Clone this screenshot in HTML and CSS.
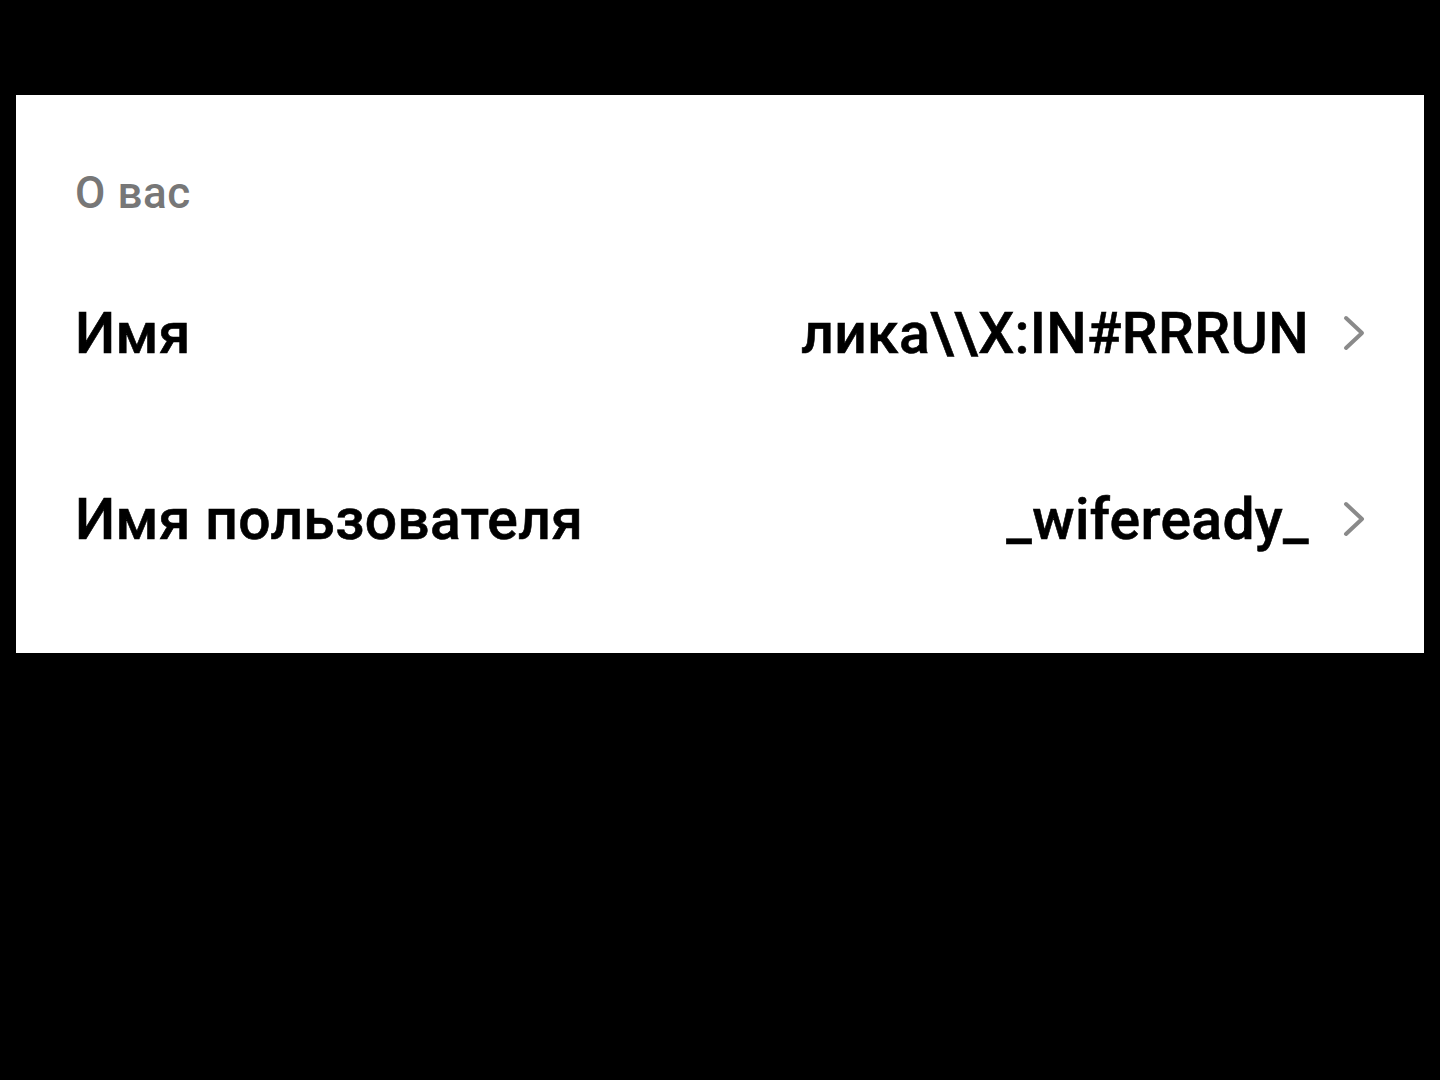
FILE: index.html
```html
<!DOCTYPE html>
<html lang="ru">
<head>
<meta charset="utf-8">
<link rel="stylesheet" href="styles.css">
</head>
<body>
<section class="panel">
  <div class="section-title">О вас</div>
  <div class="row">
    <div class="label">Имя</div>
    <div class="value-wrap">
      <span class="value">лика\\X:IN#RRRUN</span>
      <svg class="chev" viewBox="0 0 24 36" width="24" height="36"><path d="M4 3 L20 18 L4 33" fill="none" stroke="#8a8a8a" stroke-width="4" stroke-linecap="round" stroke-linejoin="round"/></svg>
    </div>
  </div>
  <div class="row">
    <div class="label">Имя пользователя</div>
    <div class="value-wrap">
      <span class="value">_wifeready_</span>
      <svg class="chev" viewBox="0 0 24 36" width="24" height="36"><path d="M4 3 L20 18 L4 33" fill="none" stroke="#8a8a8a" stroke-width="4" stroke-linecap="round" stroke-linejoin="round"/></svg>
    </div>
  </div>
</section>
</body>
</html>
```

FILE: styles.css
```css
html, body {
  margin: 0;
  padding: 0;
  background: #000;
  width: 1440px;
  height: 1080px;
  overflow: hidden;
}
body {
  font-family: Roboto, "Liberation Sans", sans-serif;
  padding-top: 95px;
  box-sizing: border-box;
}
.panel {
  margin-left: 16px;
  width: 1408px;
  height: 558px;
  background: #fff;
  box-sizing: border-box;
  padding: 68px 58px 0 59px;
}
.section-title {
  font-size: 44px;
  line-height: 60px;
  font-weight: 500;
  color: #777;
  letter-spacing: 0.6px;
  margin-bottom: 18px;
}
.row {
  height: 186px;
  display: flex;
  align-items: center;
  justify-content: space-between;
}
.label, .value {
  font-size: 57px;
  line-height: 66px;
  font-weight: 500;
  letter-spacing: 0.35px;
  color: #000;
  -webkit-text-stroke: 0.6px #000;
}
.value-wrap {
  display: flex;
  align-items: center;
  gap: 33px;
}
.chev {
  display: block;
  margin-top: -2px;
}
```
